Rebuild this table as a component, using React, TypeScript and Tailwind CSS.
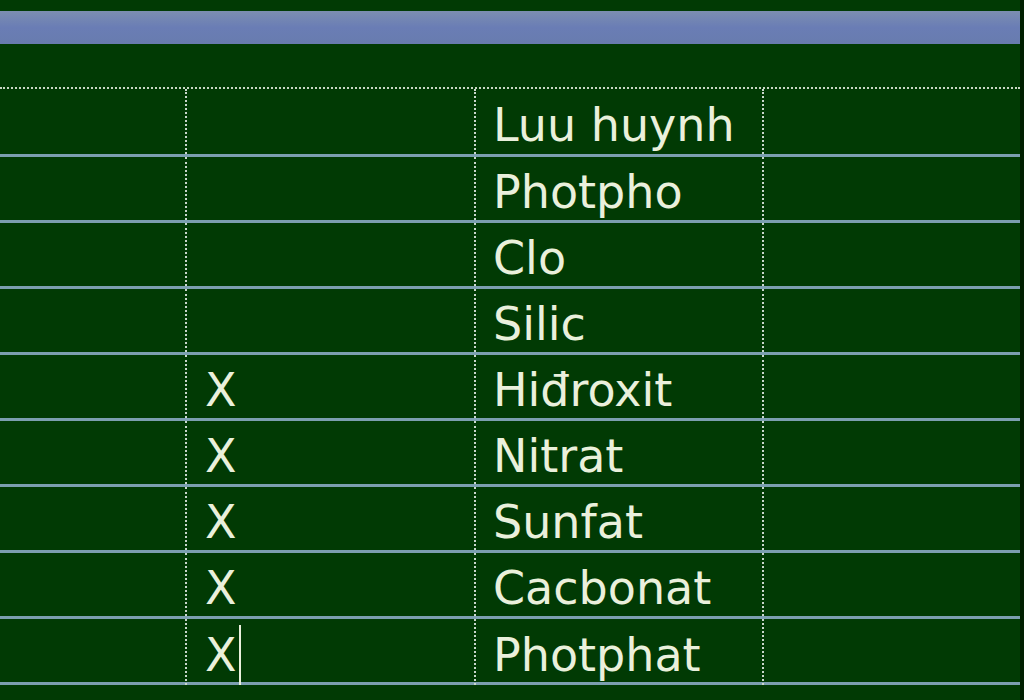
const rows = [
  { mark: "", name: "Luu huynh" },
  { mark: "", name: "Photpho" },
  { mark: "", name: "Clo" },
  { mark: "", name: "Silic" },
  { mark: "X", name: "Hiđroxit" },
  { mark: "X", name: "Nitrat" },
  { mark: "X", name: "Sunfat" },
  { mark: "X", name: "Cacbonat" },
  { mark: "X", name: "Photphat", caret: true },
];

function App() {
  return (
    <div className="flex h-[700px] w-[1024px] overflow-hidden bg-[#013a04] font-['DejaVu_Sans',sans-serif] text-[#eaf0dc]">
      <div className="w-[1020px]">
        {/* title bar strip */}
        <div className="mt-[11px] h-[33px] bg-gradient-to-b from-[#7c8eb0] via-[#6a7db5] to-[#687cae]"></div>
        <div className="h-[43px]"></div>

        <div className="border-t-2 border-dotted border-[#c9d6c4]">
          {rows.map((r, i) => (
            <div
              key={r.name}
              className={`grid grid-cols-[185px_289px_288px_1fr] border-b-[3px] border-[#7c9fb0] ${
                i === 0 ? "h-[68px]" : "h-[66px]"
              }`}
            >
              <div></div>
              <div className="flex items-center border-l-2 border-dotted border-[#c9d6cc] pl-[18px] pt-1.5 text-[46px] leading-none">
                {r.mark}
                {r.caret && <span className="ml-[2px] inline-block h-[60px] w-[2px] bg-[#eaf0dc]"></span>}
              </div>
              <div className="flex items-center border-l-2 border-dotted border-[#c9d6cc] pl-[17px] pt-1.5 text-[46px] leading-none">
                {r.name}
              </div>
              <div className="border-l-2 border-dotted border-[#c9d6cc]"></div>
            </div>
          ))}
        </div>
      </div>
      <div className="w-[4px] bg-[#001f00]"></div>
    </div>
  );
}

export default App;
